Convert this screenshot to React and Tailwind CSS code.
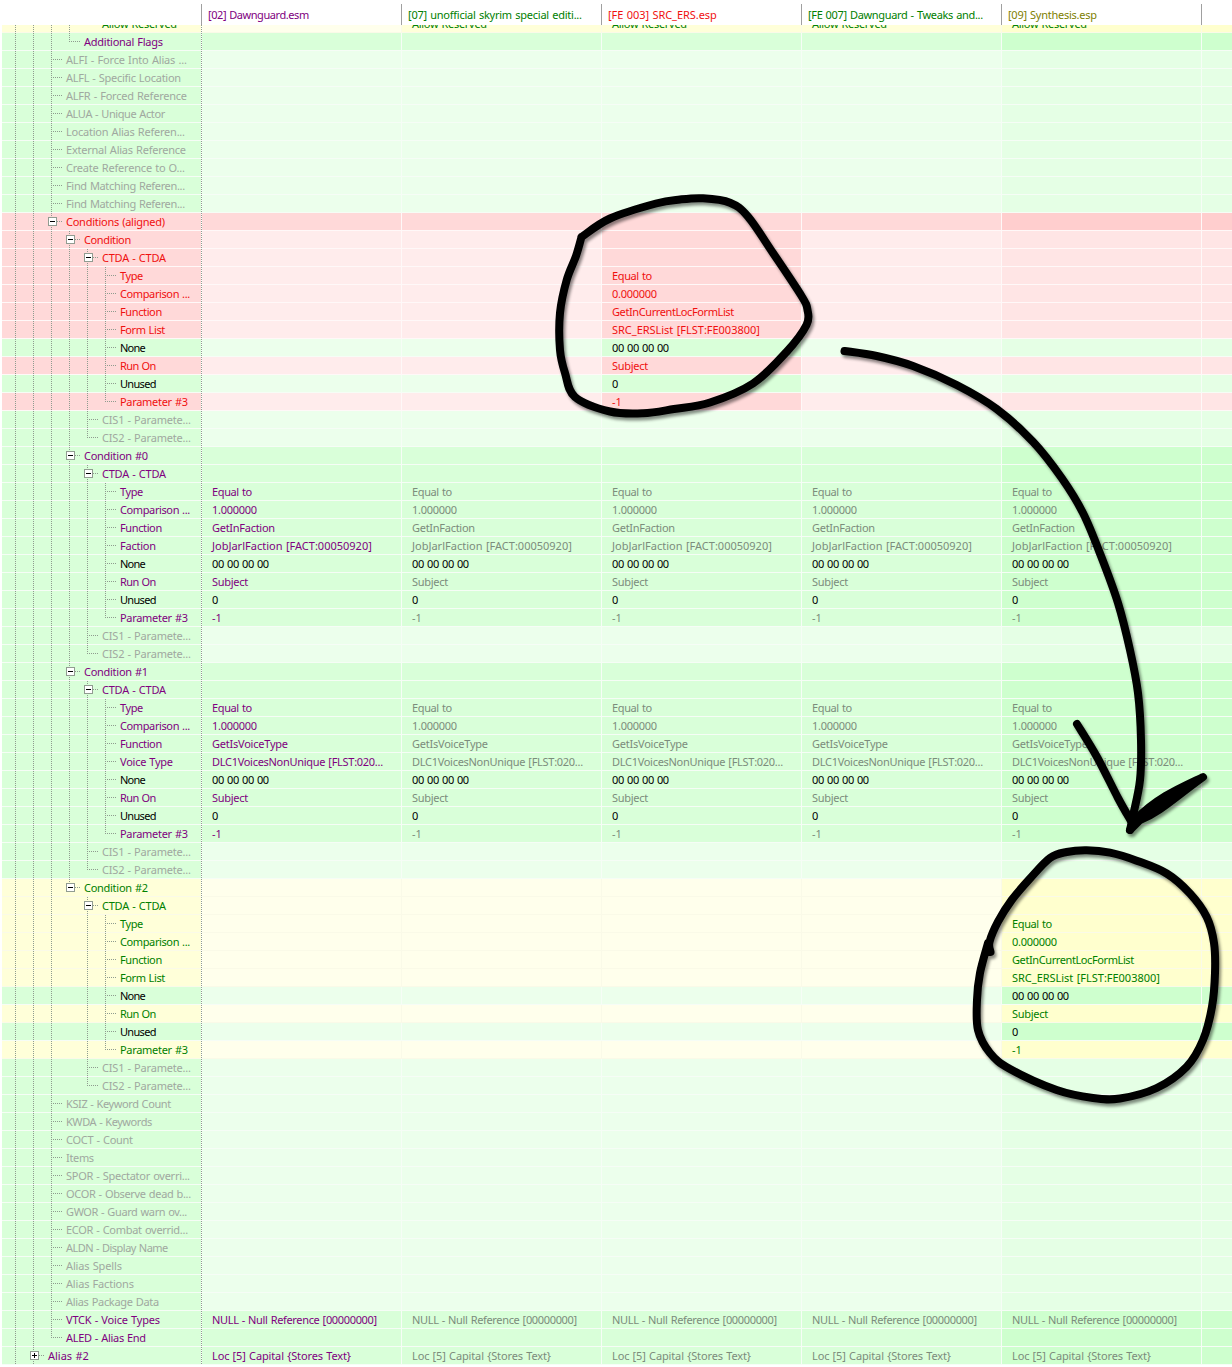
import React from "react";

const FLAG_COLORS = {
  p: "text-[#800080]",
  g: "text-[#a0a8a0]",
  r: "text-[#f01010]",
  G: "text-[#008000]",
  k: "text-black",
  d: "text-[#7c8c7c]",
  o: "text-[#808000]",
};

// Backgrounds: own value / missing value / last plugin own / last plugin missing
const BG = {
  g: ["bg-[#d9ffd9]", "bg-[#ecffec]", "bg-[#ceffce]", "bg-[#e5ffe5]"],
  r: ["bg-[#ffd9d9]", "bg-[#ffecec]", "bg-[#ffcece]", "bg-[#ffe5e5]"],
  y: ["bg-[#ffffd9]", "bg-[#ffffec]", "bg-[#ffffce]", "bg-[#ffffe5]"],
};

const LINE = { g: "border-[#f6fdf6]", r: "border-[#fff8f8]", y: "border-[#fafae8]" };

const GUIDE_X = [15, 33, 51, 69, 87, 105];

// Rendered width of each caption in pixels
const WIDTHS = {
  "Allow Reserved": 75,
  "Additional Flags": 79,
  "ALFI - Force Into Alias ...": 121,
  "ALFL - Specific Location": 115,
  "ALFR - Forced Reference": 121,
  "ALUA - Unique Actor": 99,
  "Location Alias Referen...": 119,
  "External Alias Reference": 120,
  "Create Reference to O...": 119,
  "Find Matching Referen...": 119,
  "Conditions (aligned)": 99,
  Condition: 47,
  "CTDA - CTDA": 64,
  Type: 23,
  "Comparison ...": 70,
  Function: 42,
  "Form List": 45,
  None: 25,
  "Run On": 36,
  Unused: 36,
  "Parameter #3": 68,
  "CIS1 - Paramete...": 89,
  "CIS2 - Paramete...": 89,
  "Condition #0": 64,
  "Condition #1": 64,
  "Condition #2": 64,
  Faction: 36,
  "Voice Type": 53,
  "Equal to": 40,
  "0.000000": 45,
  "1.000000": 45,
  GetInCurrentLocFormList: 122,
  "SRC_ERSList [FLST:FE003800]": 148,
  "00 00 00 00": 57,
  Subject: 36,
  GetInFaction: 63,
  "JobJarlFaction [FACT:00050920]": 160,
  GetIsVoiceType: 76,
  "DLC1VoicesNonUnique [FLST:020...": 171,
  "KSIZ - Keyword Count": 105,
  "KWDA - Keywords": 86,
  "COCT - Count": 67,
  Items: 28,
  "SPOR - Spectator overri...": 124,
  "OCOR - Observe dead b...": 125,
  "GWOR - Guard warn ov...": 121,
  "ECOR - Combat overrid...": 122,
  "ALDN - Display Name": 102,
  "Alias Spells": 56,
  "Alias Factions": 68,
  "Alias Package Data": 93,
  "VTCK - Voice Types": 94,
  "ALED - Alias End": 80,
  "Alias #2": 41,
  "NULL - Null Reference [00000000]": 165,
  "Loc [5] Capital {Stores Text}": 139,
  "[02] Dawnguard.esm": 101,
  "[07] unofficial skyrim special editi...": 174,
  "[FE 003] SRC_ERS.esp": 109,
  "[FE 007] Dawnguard - Tweaks and...": 175,
  "[09] Synthesis.esp": 89,
};

const WORD_GAP = 0.6;
let ctx;
function spacing(text) {
  const width = WIDTHS[text];
  if (!width) return undefined;
  if (!ctx) {
    ctx = document.createElement("canvas").getContext("2d");
    ctx.font = '11px "Noto Sans"';
  }
  const spaces = text.split(" ").length - 1;
  const letter = (width - 0.2 - ctx.measureText(text).width - spaces * WORD_GAP) / text.length;
  return { letterSpacing: `${letter.toFixed(3)}px`, wordSpacing: `${WORD_GAP}px` };
}

function Text({ color, children }) {
  return (
    <span className={FLAG_COLORS[color]} style={spacing(children)}>
      {children}
    </span>
  );
}

// full: guide levels running through the row; half: guide ends at the row's middle
const row = (bg, level, label, color, full, opts = {}) => ({ bg, level, label, color, full, ...opts });

const missing = (label) => row("g", 2, label, "g", [0, 1, 2]);

function condition(kind, title, color, fields, last) {
  const top = last ? [0, 1, 2] : [0, 1, 2, 3];
  const rows = [];
  rows.push(row(kind, 3, title, color, top, { box: "-", half: last ? 3 : undefined, mode: kind }));
  rows.push(row(kind, 4, "CTDA - CTDA", color, [...top, 4], { box: "-", mode: kind }));
  fields.forEach(([label, value], i) => {
    const neutral = label === "None" || label === "Unused";
    const end = i === fields.length - 1;
    rows.push(
      row(neutral ? "g" : kind, 5, label, neutral ? "k" : color, end ? [...top, 4] : [...top, 4, 5], {
        half: end ? 5 : undefined,
        value,
        neutral,
        mode: kind,
      })
    );
  });
  rows.push(row("g", 4, "CIS1 - Paramete...", "g", [...top, 4]));
  rows.push(row("g", 4, "CIS2 - Paramete...", "g", top, { half: 4 }));
  return rows;
}

const listFields = [
  ["Type", "Equal to"],
  ["Comparison ...", "0.000000"],
  ["Function", "GetInCurrentLocFormList"],
  ["Form List", "SRC_ERSList [FLST:FE003800]"],
  ["None", "00 00 00 00"],
  ["Run On", "Subject"],
  ["Unused", "0"],
  ["Parameter #3", "-1"],
];
const sharedFields = (fn, name, val) => [
  ["Type", "Equal to"],
  ["Comparison ...", "1.000000"],
  ["Function", fn],
  [name, val],
  ["None", "00 00 00 00"],
  ["Run On", "Subject"],
  ["Unused", "0"],
  ["Parameter #3", "-1"],
];

const ROWS = [
  row("g", 3, "Additional Flags", "p", [0, 1, 2], { half: 3, present: true }),
  ...[
    "ALFI - Force Into Alias ...",
    "ALFL - Specific Location",
    "ALFR - Forced Reference",
    "ALUA - Unique Actor",
    "Location Alias Referen...",
    "External Alias Reference",
    "Create Reference to O...",
    "Find Matching Referen...",
    "Find Matching Referen...",
  ].map(missing),
  row("r", 2, "Conditions (aligned)", "r", [0, 1, 2], { box: "-", present: true }),
  ...condition("r", "Condition", "r", listFields, false),
  ...condition("g", "Condition #0", "p", sharedFields("GetInFaction", "Faction", "JobJarlFaction [FACT:00050920]"), false),
  ...condition("g", "Condition #1", "p", sharedFields("GetIsVoiceType", "Voice Type", "DLC1VoicesNonUnique [FLST:020..."), false),
  ...condition("y", "Condition #2", "G", listFields, true),
  ...[
    "KSIZ - Keyword Count",
    "KWDA - Keywords",
    "COCT - Count",
    "Items",
    "SPOR - Spectator overri...",
    "OCOR - Observe dead b...",
    "GWOR - Guard warn ov...",
    "ECOR - Combat overrid...",
    "ALDN - Display Name",
    "Alias Spells",
    "Alias Factions",
    "Alias Package Data",
  ].map(missing),
  row("g", 2, "VTCK - Voice Types", "p", [0, 1, 2], { mode: "g", value: "NULL - Null Reference [00000000]" }),
  row("g", 2, "ALED - Alias End", "p", [0, 1], { half: 2, present: true }),
  row("g", 1, "Alias #2", "p", [0, 1], { box: "+", mode: "g", value: "Loc [5] Capital {Stores Text}" }),
];

const VDOTS = "bg-[repeating-linear-gradient(to_bottom,#8f9c8f_0_1px,transparent_1px_2px)]";
const HDOTS = "bg-[repeating-linear-gradient(to_right,#8f9c8f_0_1px,transparent_1px_2px)]";

function isPresent(r, col) {
  if (r.mode === "r") return col === 2;
  if (r.mode === "y") return col >= 4;
  if (r.mode === "override") return col >= 1;
  return r.present || r.mode === "g";
}

function cellBg(r, col) {
  const set = BG[r.bg];
  return set[(isPresent(r, col) ? 0 : 1) + (col >= 4 ? 2 : 0)];
}

function cellText(r, col) {
  if (!r.value || col > 4 || !isPresent(r, col)) return null;
  let color = "d";
  if (r.neutral) color = "k";
  else if (r.mode !== "g" || col === 0) color = r.color;
  return <Text color={color}>{r.value}</Text>;
}

const INDENT = ["pl-[28px]", "pl-[46px]", "pl-[64px]", "pl-[82px]", "pl-[100px]", "pl-[118px]"];

function TreeCell({ r }) {
  const x = GUIDE_X[r.level];
  return (
    <div className={`relative ml-0.5 h-[18px] w-[199px] shrink-0 overflow-hidden border-b ${LINE[r.bg]} ${BG[r.bg][0]} ${INDENT[r.level]}`}>
      {r.full.map((l) => (
        <i key={l} className={`absolute top-0 h-[18px] w-px ${VDOTS}`} style={{ left: GUIDE_X[l] - 2 }} />
      ))}
      {r.half !== undefined && <i className={`absolute top-0 h-[9px] w-px ${VDOTS}`} style={{ left: GUIDE_X[r.half] - 2 }} />}
      <i className={`absolute top-2 h-px w-3 ${HDOTS}`} style={{ left: x - 2 }} />
      {r.box && (
        <b className="absolute top-1 flex h-[9px] w-[9px] items-center justify-center border border-[#919c91] bg-white" style={{ left: x - 5 }}>
          <i className="absolute h-px w-[5px] bg-black" />
          {r.box === "+" && <i className="absolute h-[5px] w-px bg-black" />}
        </b>
      )}
      <Text color={r.color}>{r.label}</Text>
    </div>
  );
}

function Row({ r }) {
  return (
    <div className="flex h-[18px] shrink-0 whitespace-nowrap leading-[18px]">
      <TreeCell r={r} />
      <div className={`h-[18px] w-px shrink-0 ${VDOTS}`} />
      {[0, 1, 2, 3, 4].map((c) => (
        <div key={c} className={`h-[18px] w-[200px] shrink-0 overflow-hidden border-b border-r pl-2.5 ${LINE[r.bg]} ${cellBg(r, c)}`}>
          {cellText(r, c)}
        </div>
      ))}
      <div className={`h-[18px] grow border-b ${LINE[r.bg]} ${cellBg(r, 5)}`} />
    </div>
  );
}

const HEADERS = [
  ["[02] Dawnguard.esm", "p"],
  ["[07] unofficial skyrim special editi...", "G"],
  ["[FE 003] SRC_ERS.esp", "r"],
  ["[FE 007] Dawnguard - Tweaks and...", "G"],
  ["[09] Synthesis.esp", "o"],
];

// Catmull-Rom spline through the pen points
function smooth(pts) {
  let d = `M${pts[0][0]} ${pts[0][1]}`;
  for (let i = 0; i < pts.length - 1; i++) {
    const p0 = pts[i - 1] || pts[i];
    const p1 = pts[i];
    const p2 = pts[i + 1];
    const p3 = pts[i + 2] || p2;
    d += ` C${p1[0] + (p2[0] - p0[0]) / 6} ${p1[1] + (p2[1] - p0[1]) / 6} ${p2[0] - (p3[0] - p1[0]) / 6} ${p2[1] - (p3[1] - p1[1]) / 6} ${p2[0]} ${p2[1]}`;
  }
  return d;
}

const STROKES = [
  [[581.5, 237], [610, 218.5], [656, 203.5], [680, 199.5], [703, 198.3], [730, 202.7], [748, 216.7], [773, 253], [801.5, 296], [807.5, 310], [806.5, 325], [786.7, 351.7], [753, 383.5], [710, 402.5], [674, 409], [643, 413.3], [610, 411.5], [575, 397], [565, 373], [560, 350], [560, 313], [566.7, 280], [576, 256], [581.5, 237]],
  [[844.5, 351], [876.7, 356], [913, 366], [956.7, 385], [996.7, 409], [1033, 441.7], [1061.7, 478], [1083, 513], [1101, 556], [1118, 603], [1130, 650], [1138, 693], [1141, 740], [1140, 780], [1133, 816], [1130, 830]],
  [[1077, 724], [1097, 757], [1118, 798], [1131, 821]],
  [[990.5, 952], [989.5, 942], [998, 921.7], [1011.7, 900], [1030, 878.5], [1050, 858], [1066.7, 852], [1086.7, 850.3], [1110, 852.7], [1136.7, 860.7], [1166.7, 873.5], [1190, 893.5], [1206.7, 917], [1214, 943], [1215, 973], [1212, 1006.7], [1203, 1040], [1186.7, 1066.7], [1156.7, 1088], [1120, 1098.5], [1093, 1098], [1056.7, 1090], [1010, 1069], [990, 1053], [978, 1030], [977, 1000], [980, 973], [988, 943]],
];

function Scribbles() {
  return (
    <svg className="pointer-events-none absolute left-0 top-0 h-[1367px] w-[1232px] drop-shadow-[2px_3px_1.5px_rgba(0,0,0,0.45)]" viewBox="0 0 1232 1367" fill="none" stroke="#000" strokeWidth="8" strokeLinecap="round" strokeLinejoin="round">
      {STROKES.map((s, i) => (
        <path key={i} d={smooth(s)} />
      ))}
      <path d="M1203 777 C1180 788 1158 797 1135 820 L1130 830 L1140 820 C1160 812 1174 798 1203 777 Z" fill="#000" />
    </svg>
  );
}

export default function App() {
  return (
    <div className="relative h-[1367px] w-[1232px] overflow-hidden bg-white font-['Noto_Sans',sans-serif] text-[11px]">
      <div className="flex h-[25px] whitespace-nowrap pl-[201px] pt-1">
        {HEADERS.map(([t, c]) => (
          <div key={t} className="h-[21px] w-[200px] shrink-0 border-l border-[#a0a0a0] pl-1.5 leading-[22px]">
            <Text color={c}>{t}</Text>
          </div>
        ))}
        <div className="h-[21px] w-px bg-[#a0a0a0]" />
      </div>
      {/* Row scrolled partly under the header */}
      <div className="flex h-2 flex-col justify-end overflow-hidden">
        <Row r={row("y", 4, "Allow Reserved", "G", [0, 1, 2, 3], { mode: "override", value: "Allow Reserved" })} />
      </div>
      {ROWS.map((r, i) => (
        <Row key={i} r={r} />
      ))}
      <Scribbles />
    </div>
  );
}
